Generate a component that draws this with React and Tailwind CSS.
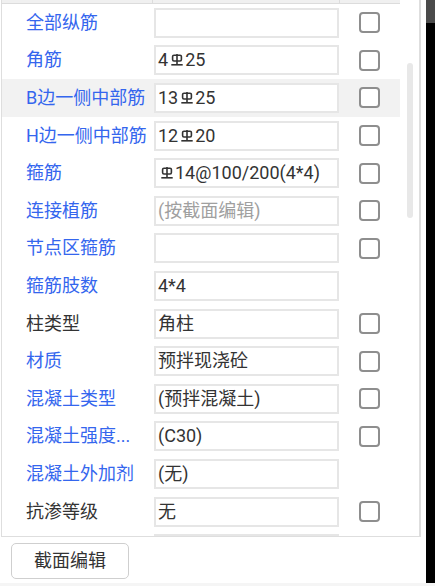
import React from "react";

const font = {
  fontFamily: 'Roboto, "Noto Sans CJK SC", sans-serif',
};

function Rebar() {
  return (
    <svg
      viewBox="0 0 12 12"
      className="inline-block w-[12px] h-[12px] ml-[3px] mr-[2px] align-[3px]"
      fill="none"
      stroke="#333"
      strokeWidth="1.6"
    >
      <rect x="1.6" y="1.2" width="8.8" height="5.8" rx="1.4" />
      <line x1="6" y1="0" x2="6" y2="10.8" />
      <line x1="0.3" y1="10.8" x2="11.7" y2="10.8" />
    </svg>
  );
}

const rows = [
  { label: "全部纵筋", value: null, check: true },
  { label: "角筋", value: <>4<Rebar />25</>, check: true },
  { label: "B边一侧中部筋", value: <>13<Rebar />25</>, check: true, active: true },
  { label: "H边一侧中部筋", value: <>12<Rebar />20</>, check: true },
  { label: "箍筋", value: <><Rebar />14@100/200(4*4)</>, check: true },
  { label: "连接植筋", value: "(按截面编辑)", muted: true, check: true },
  { label: "节点区箍筋", value: null, check: true },
  { label: "箍筋肢数", value: "4*4", check: false },
  { label: "柱类型", value: "角柱", check: true, dark: true },
  { label: "材质", value: "预拌现浇砼", check: true },
  { label: "混凝土类型", value: "(预拌混凝土)", check: true },
  { label: "混凝土强度...", value: "(C30)", check: true },
  { label: "混凝土外加剂", value: "(无)", check: false },
  { label: "抗渗等级", value: "无", check: true, dark: true },
  { label: "", value: null, check: false },
];

function Row({ row }) {
  return (
    <div
      className={`flex items-center h-[37.6px] shrink-0 ${
        row.active ? "bg-[#f2f2f2]" : ""
      }`}
    >
      <div
        className={`w-[151px] pl-[24px] text-[18px] leading-none whitespace-nowrap ${
          row.dark ? "text-[#333333]" : "text-[#3466ee]"
        }`}
      >
        {row.label}
      </div>
      <div className="w-[187px] pl-[1px]">
        <div
          className={`w-[185px] h-[30px] bg-white border-2 border-[#e6e6e6] pl-[2px] flex items-center text-[18px] leading-none whitespace-nowrap ${
            row.muted ? "text-[#a0a0a0]" : "text-[#333333]"
          }`}
        >
          {row.value}
        </div>
      </div>
      <div className="w-[60px] pl-[19px]">
        {row.check && (
          <div className="w-[21px] h-[21px] border-2 border-[#8e8e8e] rounded-[4px] bg-white" />
        )}
      </div>
    </div>
  );
}

export default function App() {
  return (
    <div className="w-[435px] h-[586px] bg-white flex flex-col overflow-hidden" style={font}>
      <div className="flex h-[583px]">
        <div className="w-[426px] flex flex-col">
          {/* property grid */}
          <div className="ml-[1px] w-[420px] h-[537px] border-l border-r-2 border-b border-[#dedede] flex overflow-hidden">
            <div className="w-[398px] flex flex-col">
              <div className="h-[4px] shrink-0 flex bg-[#f0f0f0] border-b border-[#dcdcdc]">
                <div className="w-[151px] border-r border-[#dcdcdc]" />
                <div className="w-[187px] border-r border-[#dcdcdc]" />
                <div className="w-[60px]" />
              </div>
              {rows.map((row, i) => (
                <Row key={i} row={row} />
              ))}
            </div>
            <div className="flex-1 pt-[63px] pl-[7px]">
              <div className="w-[6px] h-[155px] rounded-full bg-[#e8e8e8]" />
            </div>
          </div>
          <div className="pt-[6px] pl-[11px]">
            <button className="w-[118px] h-[36px] border border-[#cfcfcf] rounded-[5px] bg-white text-[18px] leading-none text-[#333333]">
              截面编辑
            </button>
          </div>
        </div>
        <div className="w-[9px] flex flex-col">
          <div className="h-[23px] bg-[#4a4a4a]" />
          <div className="flex-1 bg-black" />
        </div>
      </div>
      <div className="flex-1 bg-[#f5f5f5]" />
    </div>
  );
}
